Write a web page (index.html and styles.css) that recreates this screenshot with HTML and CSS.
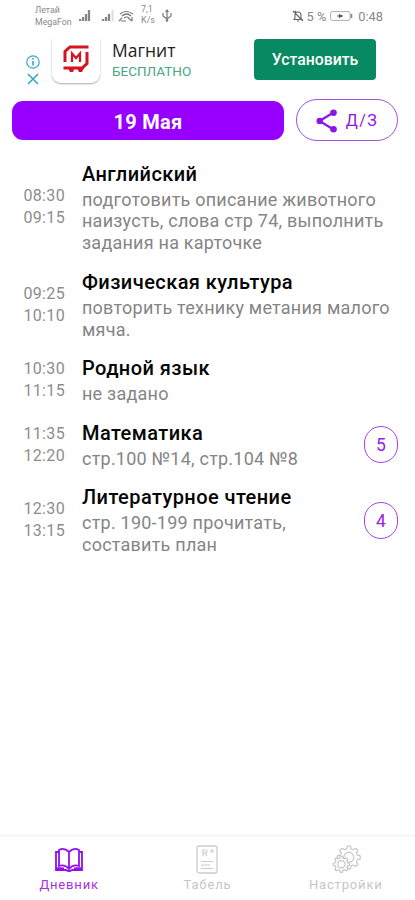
FILE: index.html
```html
<!DOCTYPE html>
<html lang="ru">
<head>
<meta charset="utf-8">
<title>Дневник</title>
<link rel="stylesheet" href="styles.css">
</head>
<body>
<div class="app">
  <header class="status">
    <div class="carrier"><span>Летай</span><span>MegaFon</span></div>
    <svg class="signals" width="58" height="16" viewBox="0 0 58 16">
      <path d="M1 12V10M4 12V8M7 12V5M10 12V1" stroke="#858585" stroke-width="2.300"/>
      <path d="M24 12V10M27 12V8M30 12V5" stroke="#858585" stroke-width="2.300"/>
      <path d="M33.500 12V1" stroke="#ddd" stroke-width="2"/>
      <path d="M41 5q6-5 13 0M43 7q5-4 9 0M45 9q3-2 5 0M40 12l3-3M42 12h5M49 9l4 3M53 8v4" fill="none" stroke="#777" stroke-width="1.200"/>
    </svg>
    <div class="speed"><span>7,1</span><span>K/s</span></div>
    <svg class="usb" width="10" height="14" viewBox="0 0 10 14"><path d="M5 1v11M1 4v3l4 3 4-3V4M3.500 3L5 1l1.500 2" fill="none" stroke="#777" stroke-width="1.200"/><circle cx="5" cy="11.500" r="1.300" fill="#777"/></svg>
    <div class="power">
      <svg width="12" height="12" viewBox="0 0 12 12"><path d="M1 1l10 10M2 9.500h8L9 8V5Q9 2 6 2T3 5v3zM5 11h2M3 2l1-1" fill="none" stroke="#666" stroke-width="1.100"/></svg>
      <span class="percent">5 %</span>
      <svg class="battery" width="23" height="10" viewBox="0 0 23 10"><rect x=".6" y=".6" width="19.500" height="8.800" rx="2" fill="none" stroke="#aaa"/><path d="M21.500 3v4" stroke="#888" stroke-width="1.600"/><path d="M7 5h6M9 3.500l3 1.500-3 1.500" fill="#555" stroke="#555"/></svg>
      <span class="clock">0:48</span>
    </div>
  </header>

  <section class="ad">
    <div class="ad-marks">
      <svg width="14" height="14" viewBox="0 0 14 14"><circle cx="7" cy="7" r="6.200" fill="none" stroke="#35a9c9" stroke-width="1.200"/><path d="M7 6v4.500M7 3v1.600" stroke="#35a9c9" stroke-width="1.600"/></svg>
      <svg width="12" height="12" viewBox="0 0 12 12"><path d="M1 1l10 10M11 1L1 11" stroke="#35a9c9" stroke-width="1.600"/></svg>
    </div>
    <div class="ad-logo">
      <svg width="26" height="28" viewBox="0 0 26 28"><g fill="none" stroke="#d6131f" stroke-width="3"><path d="M25.500 2H7L2 6.500V17"/><path d="M24 7v11.500L19 23H.5"/><path d="M9 17V8.500l4 4.500 4-4.500V17" stroke-width="2.200"/></g><path d="M5 23h6.500l-1.500 4H7zM14 23h7l-2 4h-3z" fill="#d6131f"/></svg>
    </div>
    <div class="ad-text"><div class="ad-name">Магнит</div><div class="ad-price">БЕСПЛАТНО</div></div>
    <button class="install">Установить</button>
  </section>

  <section class="toolbar">
    <button class="date">19 Мая</button>
    <button class="share">
      <svg width="22" height="24" viewBox="0 0 22 24"><path d="M17.500 3.500L3.500 12l14 8.500" fill="none" stroke="#8d16e5" stroke-width="2.200"/><g fill="#8d16e5"><circle cx="17.500" cy="3.800" r="3.300"/><circle cx="3.800" cy="12" r="3.300"/><circle cx="17.500" cy="20.200" r="3.300"/></g></svg>
      <span>Д/З</span>
    </button>
  </section>

  <main class="lessons">
    <article class="lesson">
      <div class="time">08:30<br>09:15</div>
      <div class="info"><h2>Английский</h2><p>подготовить описание животного<br>наизусть, слова стр 74, выполнить<br>задания на карточке</p></div>
    </article>
    <article class="lesson">
      <div class="time">09:25<br>10:10</div>
      <div class="info"><h2>Физическая культура</h2><p>повторить технику метания малого<br>мяча.</p></div>
    </article>
    <article class="lesson">
      <div class="time">10:30<br>11:15</div>
      <div class="info"><h2>Родной язык</h2><p>не задано</p></div>
    </article>
    <article class="lesson">
      <div class="time">11:35<br>12:20</div>
      <div class="info"><h2>Математика</h2><p>стр.100 №14, стр.104 №8</p></div>
      <div class="grade">5</div>
    </article>
    <article class="lesson">
      <div class="time">12:30<br>13:15</div>
      <div class="info"><h2>Литературное чтение</h2><p>стр. 190-199 прочитать,<br>составить план</p></div>
      <div class="grade">4</div>
    </article>
  </main>

  <nav class="tabs">
    <a class="tab active">
      <svg width="30" height="26" viewBox="0 0 30 26"><g fill="none" stroke="#9410e8" stroke-width="1.800"><path d="M15 5Q10 0 5 3v16q6-2 10 3 4-5 10-3V3q-5-3-10 2v17"/><path d="M5 5H2v18h10q3 2 6 0h10V5h-3M2 21l8 .5M28 21l-8 .5"/></g></svg>
      <span>Дневник</span>
    </a>
    <a class="tab">
      <svg width="22" height="30" viewBox="0 0 22 30"><rect x="1" y="1" width="20" height="27" rx="2" fill="none" stroke="#ccc" stroke-width="1.300"/><path d="M7 11V5h2q2 0 2 1.600T9 8H7M9 8l2 3M14 6h4M16 4v4M5 16.500h12M5 20h9M5 23.500h12" fill="none" stroke="#ccc" stroke-width="1.200"/></svg>
      <span>Табель</span>
    </a>
    <a class="tab">
      <svg width="30" height="30" viewBox="0 0 30 30"><g fill="#fff" stroke="#c6c6c6" stroke-width="1.200" stroke-linejoin="round"><path d="M15.600 3.900L16.300 1h3l.7 2.900 2.300.9 2.500-1.500 2.100 2.100-1.500 2.500.9 2.300 2.900.7v3l-2.900.7-.9 2.300 1.500 2.500-2.100 2.100-2.500-1.500-2.300.9-.7 2.900h-3l-.7-2.900-2.300-.9-2.500 1.500-2.100-2.100 1.500-2.500-.9-2.300-2.900-.7v-3l2.900-.7.9-2.300-1.500-2.500 2.100-2.100 2.500 1.500z"/><circle cx="17.800" cy="12.400" r="5"/><path d="M8.800 13.200l.6-2h2l.6 2 1.600.7 1.900-1.100 1.400 1.400-1.100 1.900.7 1.600 2 .6v2l-2 .6-.7 1.600 1.100 1.900-1.400 1.400-1.900-1.100-1.600.7-.6 2h-2l-.6-2-1.600-.7-1.900 1.100-1.400-1.400L5 22.500l-.7-1.600-2-.6v-2l2-.6.7-1.600-1.100-1.900 1.400-1.400 1.900 1.100z"/><circle cx="10.400" cy="19.300" r="3.600"/></g></svg>
      <span>Настройки</span>
    </a>
  </nav>
</div>
</body>
</html>
```
FILE: styles.css
```css
* { box-sizing: border-box; }
body { margin: 0; background: #fff; font-family: Roboto, sans-serif; }
button { border: 0; padding: 0; font-family: inherit; }
svg { display: block; flex: none; }
.app { width: 415px; height: 900px; display: flex; flex-direction: column; overflow: hidden; }

.status { height: 38px; display: flex; align-items: flex-start; padding: 4px 32px 0 35px; color: #888; }
.carrier { width: 44px; font-size: 8.8px; line-height: 12px; }
.carrier span, .speed span { display: block; }
.signals { margin-top: 5px; }
.speed { width: 20px; margin-left: 4px; font-size: 9px; line-height: 11px; }
.usb { margin: 5px 0 0 1px; }
.power { margin-left: auto; display: flex; align-items: center; height: 24px; gap: 3px; font-size: 12.8px; }
.battery { margin-left: 1px; }
.clock { margin-left: 2px; }

.ad { height: 56px; display: flex; padding-left: 26px; }
.ad-marks { width: 26px; padding-top: 17px; display: flex; flex-direction: column; gap: 4px; }
.ad-marks svg + svg { margin-left: 1px; }
.ad-logo { width: 48px; height: 45px; display: flex; justify-content: center; padding-top: 7px; border-radius: 0 0 9px 9px; box-shadow: 0 1px 2px #aaa; clip-path: inset(0 -4px -4px -4px); }
.ad-text { width: 142px; padding-left: 12px; }
.ad-name { font: 500 17.5px/25px "Open Sans", sans-serif; color: #222; }
.ad-price { font-size: 13.5px; line-height: 17px; color: #47a883; }
.install { width: 122px; height: 41px; margin: 1px 0 0 12px; border-radius: 4px; background: #078a61; color: #fff; font-size: 15.8px; font-weight: 500; }

.toolbar { display: flex; padding: 5px 17px 0 12px; height: 48px; justify-content: space-between; }
.date { width: 272px; height: 39px; margin-top: 2px; border-radius: 11px; background: #9700ff; color: #fff; font-size: 20px; font-weight: 700; letter-spacing: .3px; padding-top: 3px; }
.share { width: 102px; height: 42px; border: 1px solid #a451e2; border-radius: 21px; background: #fff; color: #8d16e5; display: flex; align-items: center; justify-content: center; gap: 8px; font-size: 16px; letter-spacing: 1.5px; padding-top: 1px; }

.lessons { flex: 1; display: flex; flex-direction: column; gap: 14.8px; padding: 18.7px 17px 0 0; }
.lesson { display: flex; align-items: center; }
.time { width: 65px; text-align: right; font-size: 16px; line-height: 22px; letter-spacing: .35px; color: #8d8d8d; }
.info { flex: 1; padding-left: 17px; white-space: nowrap; }
.info h2 { margin: 0 0 2px; font-size: 20px; line-height: 26px; font-weight: 500; letter-spacing: .43px; color: #050505; }
.info p { margin: 0; font-size: 18px; line-height: 21.8px; letter-spacing: .23px; color: #858585; }
.grade { width: 34px; height: 37px; border: 1px solid #a642e9; border-radius: 17px; color: #9822e4; font-size: 17.5px; line-height: 36px; text-align: center; }

.tabs { height: 66px; border-top: 3px solid #f8f8f8; display: flex; }
.tab { flex: 1; display: flex; flex-direction: column; align-items: center; justify-content: flex-end; padding-bottom: 6px; font-size: 13px; line-height: 18px; color: #c6c6c6; letter-spacing: .85px; gap: 1px; }
.tab.active { color: #a332e7; gap: 3px; }
```
